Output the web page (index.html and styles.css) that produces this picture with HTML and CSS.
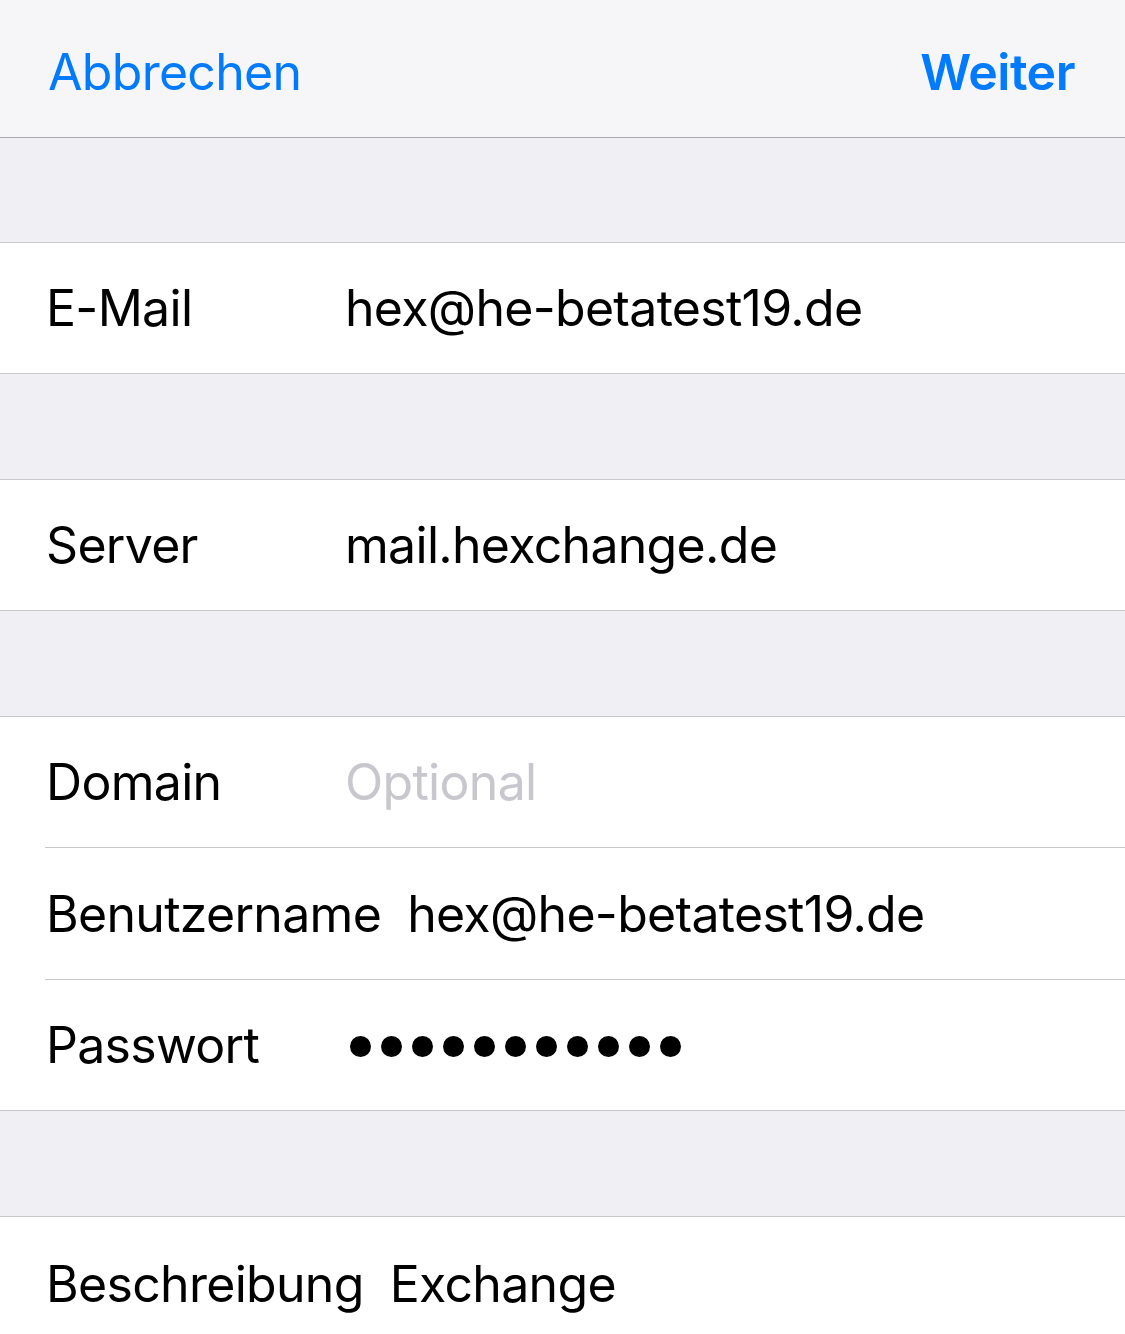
FILE: index.html
```html
<!DOCTYPE html>
<html lang="de">
<head>
<meta charset="utf-8">
<link rel="stylesheet" href="styles.css">
</head>
<body>
<header class="nav">
  <span class="nav-btn">Abbrechen</span>
  <span class="nav-btn nav-btn-bold">Weiter</span>
</header>
<div class="gap gap-first"></div>
<section class="group">
  <div class="row"><span class="label">E-Mail</span><span class="value">hex@he-betatest19.de</span></div>
</section>
<div class="gap"></div>
<section class="group">
  <div class="row"><span class="label">Server</span><span class="value">mail.hexchange.de</span></div>
</section>
<div class="gap"></div>
<section class="group">
  <div class="row"><span class="label">Domain</span><span class="value placeholder">Optional</span></div>
  <div class="row"><span class="label">Benutzername</span><span class="value">hex@he-betatest19.de</span></div>
  <div class="row"><span class="label">Passwort</span><span class="value dots" aria-label="Passwort"><i></i><i></i><i></i><i></i><i></i><i></i><i></i><i></i><i></i><i></i><i></i></span></div>
</section>
<div class="gap"></div>
<section class="group group-last">
  <div class="row"><span class="label">Beschreibung</span><span class="value">Exchange</span></div>
</section>
</body>
</html>
```
FILE: styles.css
```css
html, body {
  margin: 0;
  padding: 0;
  background: #efeff4;
  font-family: Inter, "Open Sans", "Liberation Sans", sans-serif;
  -webkit-font-smoothing: antialiased;
}
.nav {
  background: #f6f6f8;
  border-bottom: 1px solid #a7a7aa;
  display: flex;
  justify-content: space-between;
  align-items: center;
  padding: 6px 50px 0 48px;
  box-sizing: border-box;
  height: 138px;
}
.nav-btn {
  color: #007aff;
  font-size: 50px;
  letter-spacing: -0.7px;
}
.nav-btn-bold {
  font-weight: 600;
  letter-spacing: -0.5px;
}
.gap {
  height: 105px;
}
.gap-first {
  height: 104px;
}
.group {
  background: #fff;
  border-top: 1px solid #c8c7cc;
  border-bottom: 1px solid #c8c7cc;
  padding-left: 45px;
}
.row {
  height: 130px;
  display: flex;
  align-items: center;
  font-size: 50px;
  color: #000;
  letter-spacing: -0.7px;
}
.row + .row {
  border-top: 1px solid #c8c7cc;
}
.group .row:nth-child(2) {
  height: 131px;
}
.label {
  min-width: 273px;
  margin-right: 26px;
  padding-left: 1px;
}
.placeholder {
  color: #c7c7cd;
}
.dots {
  display: flex;
  gap: 10px;
  padding-left: 5px;
  padding-top: 2px;
}
.dots i {
  display: block;
  width: 21px;
  height: 21px;
  border-radius: 50%;
  background: #000;
}
.group-last {
  border-bottom: none;
  height: 120px;
  overflow: hidden;
}
.group-last .row {
  padding-top: 2px;
}
```
